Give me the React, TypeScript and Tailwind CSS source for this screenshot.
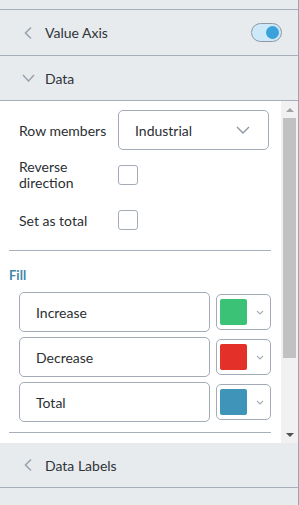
import React from 'react';

const LINE = 'border-[#a7b0ba]';

function ChevronLeft() {
  return (
    <svg width="10" height="14" viewBox="0 0 10 14" className="shrink-0">
      <polyline points="8,1.5 2.5,7 8,12.5" fill="none" stroke="#9aa3ad" strokeWidth="1.6" />
    </svg>
  );
}

function ChevronDown({ w = 13, h = 8, color = '#9aa3ad', sw = 1.5 }: { w?: number; h?: number; color?: string; sw?: number }) {
  return (
    <svg width={w} height={h} viewBox={`0 0 ${w} ${h}`} className="shrink-0">
      <polyline points={`1,1 ${w / 2},${h - 1} ${w - 1},1`} fill="none" stroke={color} strokeWidth={sw} />
    </svg>
  );
}

function SectionHeader({ title, open, toggle, h }: { title: string; open?: boolean; toggle?: boolean; h: string }) {
  return (
    <div className={`${h} shrink-0 flex items-center border-b ${LINE} pl-[22px] pr-[16px]`}>
      <div className="w-[23px] flex items-center">
        {open ? <ChevronDown w={13} h={8} /> : <span className="pl-[1px]"><ChevronLeft /></span>}
      </div>
      <span className="text-[14px] text-[#2e3338]">{title}</span>
      {toggle && (
        <div className="ml-auto w-[31px] h-[19px] rounded-full bg-[#cde8f8] border border-[#8e99a5] flex items-center justify-end pr-[2px]">
          <div className="w-[13px] h-[13px] rounded-full bg-[#3aa2db]" />
        </div>
      )}
    </div>
  );
}

function Checkbox() {
  return <div className="w-[20px] h-[20px] rounded-[3px] border border-[#a3acb6] bg-white" />;
}

function FillRow({ label, color }: { label: string; color: string }) {
  return (
    <div className="flex items-center">
      <div className="w-[191px] h-[40px] rounded-[5px] border border-[#a3acb6] flex items-center pl-[16px] text-[14px] text-[#2b2f33]">
        {label}
      </div>
      <div className="ml-[6px] w-[55px] h-[36px] rounded-[5px] border border-[#a3acb6] flex items-center pl-[3px]">
        <div className="w-[27px] h-[26px] rounded-[2px]" style={{ backgroundColor: color }} />
        <div className="ml-[9px]">
          <ChevronDown w={8} h={5} color="#a4acb6" sw={1.1} />
        </div>
      </div>
    </div>
  );
}

export default function App() {
  return (
    <div
      className="w-[299px] h-[505px] bg-[#e8ebee] border-r border-[#9ba5b0] flex flex-col overflow-hidden"
      style={{ fontFamily: 'Lato, "Open Sans", sans-serif' }}
    >
      <div className={`h-[10px] shrink-0 border-b ${LINE}`} />
      <SectionHeader title="Value Axis" toggle h="h-[46px]" />
      <SectionHeader title="Data" open h="h-[45px]" />

      {/* --- DATA BODY --- */}
      <div className="h-[342px] shrink-0 flex bg-white">
        <div className="w-[281px] pl-[9px] pr-[10px] overflow-hidden">
          <div className="pl-[10px]">
            <div className="mt-[9px] h-[40px] flex items-center">
              <span className="w-[99px] text-[14px] text-[#2b2f33]">Row members</span>
              <div className="w-[151px] h-[40px] rounded-[5px] border border-[#a3acb6] flex items-center pl-[16px] pr-[18px]">
                <span className="text-[14px] text-[#2b2f33]">Industrial</span>
                <span className="ml-auto">
                  <ChevronDown w={14} h={8} color="#8c96a1" sw={1.4} />
                </span>
              </div>
            </div>
            <div className="mt-[9px] h-[32px] flex items-center">
              <span className="w-[99px] text-[14px] leading-[16px] text-[#2b2f33]">
                Reverse
                <br />
                direction
              </span>
              <Checkbox />
            </div>
            <div className="mt-[19px] h-[20px] flex items-center">
              <span className="w-[99px] text-[14px] text-[#2b2f33]">Set as total</span>
              <Checkbox />
            </div>
          </div>

          <div className="mt-[20px] border-t border-[#a7b0ba]" />

          <div className="mt-[16px] text-[13px] leading-[16px] font-bold text-[#3f86a8]">Fill</div>

          <div className="mt-[9px] pl-[10px] flex flex-col gap-[5px]">
            <FillRow label="Increase" color="#3cc276" />
            <FillRow label="Decrease" color="#e33028" />
            <FillRow label="Total" color="#3f94b9" />
          </div>

          <div className="mt-[10px] border-t border-[#a7b0ba]" />
        </div>

        {/* scrollbar */}
        <div className="w-[17px] bg-[#f1f1f1] flex flex-col items-center">
          <div className="h-[17px] flex items-center justify-center">
            <div className="w-0 h-0 border-l-[4px] border-r-[4px] border-b-[4px] border-l-transparent border-r-transparent border-b-[#a3a3a3]" />
          </div>
          <div className="w-[13px] h-[240px] bg-[#c1c1c1]" />
          <div className="mt-auto h-[17px] flex items-center justify-center">
            <div className="w-0 h-0 border-l-[4px] border-r-[4px] border-t-[4px] border-l-transparent border-r-transparent border-t-[#505050]" />
          </div>
        </div>
      </div>

      <SectionHeader title="Data Labels" h="h-[45px]" />
    </div>
  );
}
